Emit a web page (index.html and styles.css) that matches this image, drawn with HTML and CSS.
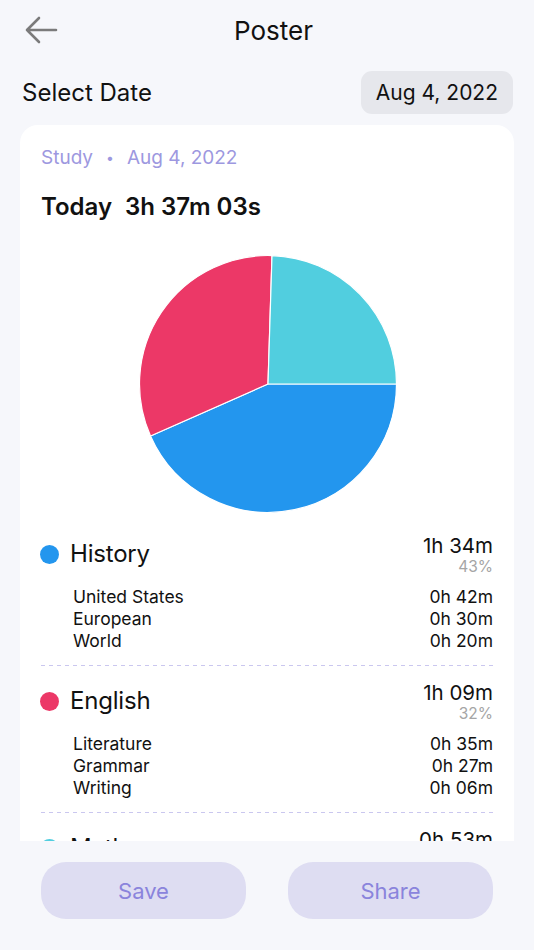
FILE: index.html
```html
<!DOCTYPE html>
<html>
<head>
<meta charset="utf-8">
<link rel="stylesheet" href="styles.css">
</head>
<body>
<div class="app">
  <header class="topbar">
    <button class="back" aria-label="Back">
      <svg width="34" height="28" viewBox="0 0 34 28"><path d="M15 2 L3 14 L15 26 M3 14 H32" fill="none" stroke="#7b7b7b" stroke-width="2.6" stroke-linecap="round" stroke-linejoin="round"/></svg>
    </button>
    <h1 class="title">Poster</h1>
  </header>
  <div class="date-row">
    <span class="date-label">Select Date</span>
    <span class="date-pill">Aug 4, 2022</span>
  </div>
  <div class="scroll">
    <div class="card">
      <div class="meta"><span>Study</span><span class="dot-sep">•</span><span>Aug 4, 2022</span></div>
      <div class="today"><span>Today</span><span>3h 37m 03s</span></div>
      <div class="chart">
        <svg width="260" height="260" viewBox="0 0 260 260">
          <path d="M130 130 L258.5 130 A128.5 128.5 0 0 1 12.5 182 Z" fill="#2396EE" stroke="#fff" stroke-width="1.2" stroke-linejoin="round"/>
          <path d="M130 130 L12.5 182 A128.5 128.5 0 0 1 134 1.56 Z" fill="#EC3867" stroke="#fff" stroke-width="1.2" stroke-linejoin="round"/>
          <path d="M130 130 L134 1.56 A128.5 128.5 0 0 1 258.5 130 Z" fill="#51CEDF" stroke="#fff" stroke-width="1.2" stroke-linejoin="round"/>
        </svg>
      </div>

      <section class="subject">
        <div class="subject-head">
          <div class="subject-name"><span class="dot blue"></span>History</div>
          <div class="subject-time"><div class="time">1h 34m</div><div class="pct">43%</div></div>
        </div>
        <ul class="items">
          <li><span>United States</span><span>0h 42m</span></li>
          <li><span>European</span><span>0h 30m</span></li>
          <li><span>World</span><span>0h 20m</span></li>
        </ul>
      </section>
      <div class="sep"></div>
      <section class="subject">
        <div class="subject-head">
          <div class="subject-name"><span class="dot red"></span>English</div>
          <div class="subject-time"><div class="time">1h 09m</div><div class="pct">32%</div></div>
        </div>
        <ul class="items">
          <li><span>Literature</span><span>0h 35m</span></li>
          <li><span>Grammar</span><span>0h 27m</span></li>
          <li><span>Writing</span><span>0h 06m</span></li>
        </ul>
      </section>
      <div class="sep"></div>
      <section class="subject">
        <div class="subject-head">
          <div class="subject-name"><span class="dot cyan"></span>Math</div>
          <div class="subject-time"><div class="time">0h 53m</div></div>
        </div>
      </section>
    </div>
  </div>
  <footer class="actions">
    <button class="btn">Save</button>
    <button class="btn">Share</button>
  </footer>
</div>
</body>
</html>
```
FILE: styles.css
```css
* { box-sizing: border-box; }
html, body { margin: 0; padding: 0; }
body {
  background: #F6F7FB;
  font-family: Inter, "Noto Sans", "Liberation Sans", sans-serif;
  color: #111;
}
.app {
  width: 534px;
  height: 950px;
  display: flex;
  flex-direction: column;
}
.topbar {
  height: 60px;
  display: flex;
  align-items: center;
  justify-content: center;
  position: relative;
}
.back {
  position: absolute;
  left: 24px;
  top: 16px;
  border: 0;
  background: none;
  padding: 0;
  width: 34px;
  height: 28px;
}
.back svg { display: block; }
.title {
  margin: 0;
  font-size: 26px;
  font-weight: 400;
  padding-left: 13px;
}
.date-row {
  height: 65px;
  padding: 11px 21px 0 22px;
  display: flex;
  justify-content: space-between;
  align-items: flex-start;
}
.date-label {
  font-size: 24px;
  line-height: 44px;
}
.date-pill {
  background: #E6E7EC;
  border-radius: 11px;
  height: 43px;
  padding: 0 15px 0 15px;
  font-size: 21px;
  line-height: 43px;
}
.scroll {
  height: 716px;
  overflow: hidden;
  padding: 0 20px;
}
.card {
  background: #fff;
  border-radius: 18px;
  padding: 21px 21px 20px 21px;
  min-height: 740px;
}
.meta {
  font-size: 19px;
  line-height: 24px;
  color: #9D98E0;
  display: flex;
  gap: 13px;
}
.dot-sep { font-size: 14px; }
.today {
  margin-top: 22px;
  font-size: 24px;
  line-height: 30px;
  font-weight: 600;
  display: flex;
  gap: 13px;
}
.chart {
  margin-top: 32px;
  display: flex;
  justify-content: center;
  padding-left: 1px;
}
.chart svg { display: block; }
.subject { margin-top: 20px; }
.sep + .subject { margin-top: 15px; }
.subject-head {
  display: flex;
  justify-content: space-between;
  align-items: flex-start;
}
.subject-name {
  display: flex;
  align-items: center;
  gap: 11px;
  font-size: 24px;
  line-height: 40px;
  height: 40px;
  letter-spacing: -0.2px;
}
.dot {
  width: 19px;
  height: 19px;
  border-radius: 50%;
  display: inline-block;
  margin-left: -1px;
}
.dot.blue { background: #2396EE; }
.dot.red { background: #EC3867; }
.dot.cyan { background: #51CEDF; }
.subject-time { text-align: right; }
.time { font-size: 20.5px; line-height: 24px; }
.pct { font-size: 15.5px; line-height: 18px; color: #A5A5A5; }
.items {
  list-style: none;
  margin: 10px 0 0 0;
  padding: 0 0 0 32px;
}
.items li {
  display: flex;
  justify-content: space-between;
  font-size: 17.5px;
  line-height: 22px;
}
.sep {
  margin-top: 13px;
  height: 1px;
  background-image: linear-gradient(to right, #CAC7EF 0 4px, transparent 4px 8px);
  background-size: 8px 1px;
  background-repeat: repeat-x;
}
.actions {
  flex: 1;
  display: flex;
  justify-content: space-between;
  padding: 21px 41px 0 41px;
}
.btn {
  width: 205px;
  height: 57px;
  border: 0;
  border-radius: 25px;
  background: #DEDDF2;
  color: #8A84DC;
  font-family: Inter, "Noto Sans", "Liberation Sans", sans-serif;
  font-size: 22px;
}
```
